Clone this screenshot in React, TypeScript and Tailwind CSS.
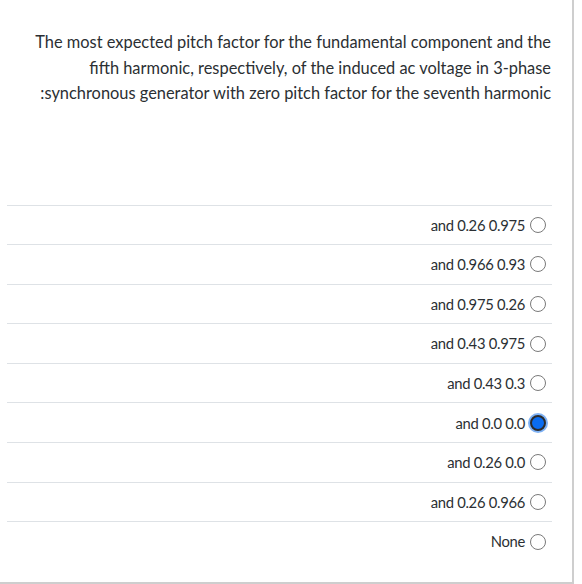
import { useState } from "react";

const options = [
  "and 0.26 0.975",
  "and 0.966 0.93",
  "and 0.975 0.26",
  "and 0.43 0.975",
  "and 0.43 0.3",
  "and 0.0 0.0",
  "and 0.26 0.0",
  "and 0.26 0.966",
  "None",
];

const App = () => {
  const [selected, setSelected] = useState(5);

  return (
    <div
      className="w-[574px] h-[584px] bg-white border-r-2 border-b-2 border-[#cecece] text-[#2b2f33]"
      style={{ fontFamily: "Lato, 'Open Sans', sans-serif" }}
    >
      <div className="pt-[29px] pr-[21px] pl-[30px] text-right text-[16.4px] leading-[25.5px]">
        <p>The most expected pitch factor for the fundamental component and the</p>
        <p>fifth harmonic, respectively, of the induced ac voltage in 3-phase</p>
        <p>:synchronous generator with zero pitch factor for the seventh harmonic</p>
      </div>
      <div className="mt-[99px] ml-[7px] w-[545px]">
        {options.map((opt, i) => (
          <label
            key={i}
            onClick={() => setSelected(i)}
            className="flex items-center justify-end gap-[5px] pr-[6px] h-[39.6px] border-t border-[#dee2e6] text-[14.8px] tracking-[-0.3px] cursor-pointer"
          >
            <span>{opt}</span>
            {selected === i ? (
              <span className="w-[16px] h-[16px] rounded-full border-2 border-[#2b2b2b] bg-[#0a6cf0] shadow-[0_0_0_2px_#7fb2f5]" />
            ) : (
              <span className="w-[16px] h-[16px] rounded-full border border-[#7a7a7a] bg-white" />
            )}
          </label>
        ))}
      </div>
    </div>
  );
};

export default App;
